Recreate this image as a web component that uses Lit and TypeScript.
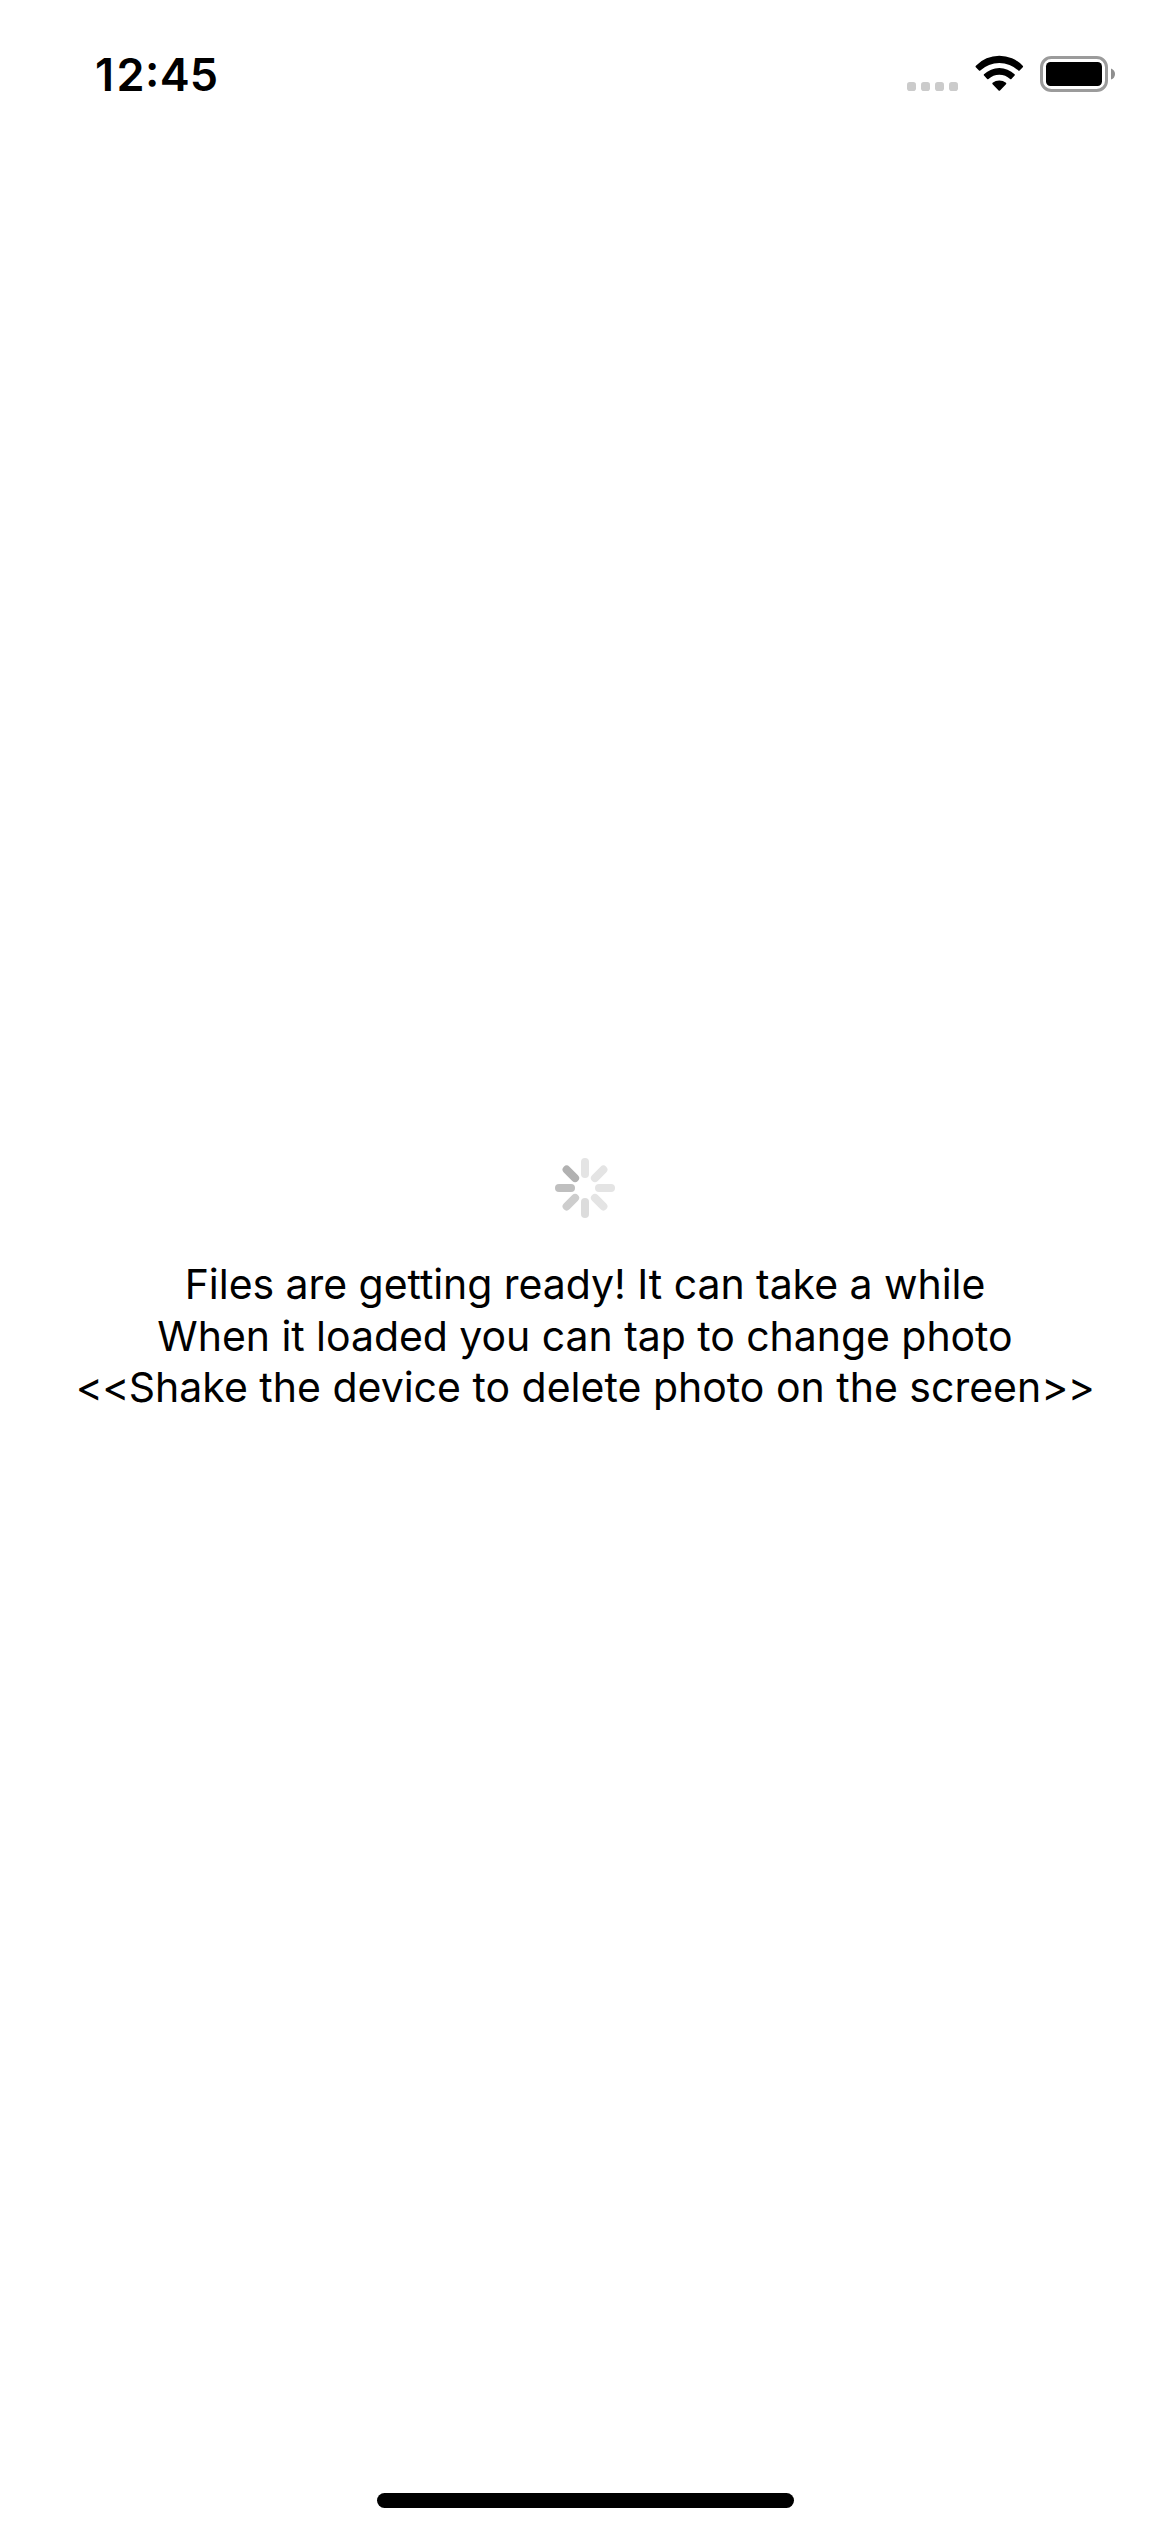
import { LitElement, html, css, svg } from "lit";
import { customElement } from "lit/decorators.js";

const SPOKES = ["#e4e4e4", "#e4e4e4", "#e4e4e4", "#e4e4e4", "#dcdcdc", "#cdcdcd", "#bfbfbf", "#b1b1b1"];

@customElement("status-bar")
export class StatusBar extends LitElement {
  static styles = css`
    :host {
      display: flex;
      justify-content: space-between;
      box-sizing: border-box;
      height: 141px;
      padding: 47px 55px 0 95px;
    }
    .time {
      display: flex;
      font-size: 45px;
      font-weight: 600;
      line-height: 55px;
      height: 55px;
    }
    .one { letter-spacing: 2.4px; }
    .two { letter-spacing: 0.5px; }
    .colon { letter-spacing: 0.5px; font-feature-settings: "case"; }
    .icons {
      display: flex;
      align-items: flex-end;
      height: 45px;
    }
    .icons svg { display: block; }
    .wifi { margin-left: 17px; }
    .battery { margin-left: 16px; }
  `;

  render() {
    return html`
      <div class="time"><span class="one">1</span><span class="two">2</span><span class="colon">:</span><span>45</span></div>
      <div class="icons">
        <svg width="51" height="37" viewBox="0 0 51 37" fill="#cbcbcb">
          ${[0, 14, 28, 42].map((x) => svg`<rect x=${x} y="27" width="9" height="9" rx="2.8" />`)}
        </svg>
        <svg class="wifi" width="49" height="37" viewBox="0 0 49 37">
          <path d="M0.9 10.7A32.4 32.4 0 0 1 47.7 10.7Q48.5 11.4 47.8 12.2L44.6 15.4Q44 16 43.3 15.4A28 28 0 0 0 5.3 15.4Q4.6 16 4 15.4L0.8 12.2Q0.1 11.4 0.9 10.7Z" />
          <path d="M9 19.2A22.3 22.3 0 0 1 39.6 19.2Q40.3 19.9 39.6 20.6L36.4 23.9Q35.8 24.5 35.1 23.9A15.9 15.9 0 0 0 13.5 23.9Q12.8 24.5 12.2 23.9L9 20.6Q8.3 19.9 9 19.2Z" />
          <path d="M17.6 27.8A10.7 10.7 0 0 1 31 27.8Q31.7 28.5 31 29.2L25 35.5Q24.3 36.2 23.6 35.5L17.6 29.2Q16.9 28.5 17.6 27.8Z" />
        </svg>
        <svg class="battery" width="75" height="36" viewBox="0 0 75 36">
          <rect x="1.5" y="1.5" width="65" height="33" rx="9.8" fill="none" stroke="#9b9b9b" stroke-width="3" />
          <rect x="6" y="6" width="56" height="24" rx="4.5" />
          <path d="M71 12.4Q75 14 75 18Q75 22 71 23.6Z" fill="#8f8f8f" />
        </svg>
      </div>
    `;
  }
}

@customElement("activity-spinner")
export class ActivitySpinner extends LitElement {
  static styles = css`
    :host { display: block; width: 60px; height: 60px; }
    svg { display: block; }
  `;

  render() {
    return html`
      <svg width="60" height="60" viewBox="-30 -30 60 60">
        ${SPOKES.map((c, i) => svg`<rect x="-4" y="-30" width="8" height="20" rx="4" fill=${c} transform=${`rotate(${i * 45})`} />`)}
      </svg>
    `;
  }
}

@customElement("app-root")
export class AppRoot extends LitElement {
  static styles = css`
    :host {
      display: flex;
      flex-direction: column;
      width: 1170px;
      height: 2532px;
      overflow: hidden;
      background: #fff;
      color: #000;
      font-family: Inter, "Liberation Sans", sans-serif;
    }
    main {
      flex: 1;
      display: flex;
      flex-direction: column;
      align-items: center;
      padding-top: 1017px;
    }
    .message {
      margin-top: 41px;
      font-size: 41px;
      line-height: 51.5px;
      letter-spacing: -0.05px;
      text-align: center;
      white-space: nowrap;
    }
    .shake { letter-spacing: 0; }
    .angle { letter-spacing: -0.65px; }
    footer {
      display: flex;
      justify-content: center;
      padding-bottom: 24px;
    }
    .home {
      width: 417px;
      height: 15px;
      border-radius: 7.5px;
      background: #000;
    }
  `;

  render() {
    return html`
      <status-bar></status-bar>
      <main>
        <activity-spinner></activity-spinner>
        <div class="message">
          <div>Files are getting ready! It can take a while</div>
          <div>When it loaded you can tap to change photo</div>
          <div class="shake"><span class="angle">&lt;&lt;</span>Shake the device to delete photo on the screen<span class="angle">&gt;&gt;</span></div>
        </div>
      </main>
      <footer><div class="home"></div></footer>
    `;
  }
}
